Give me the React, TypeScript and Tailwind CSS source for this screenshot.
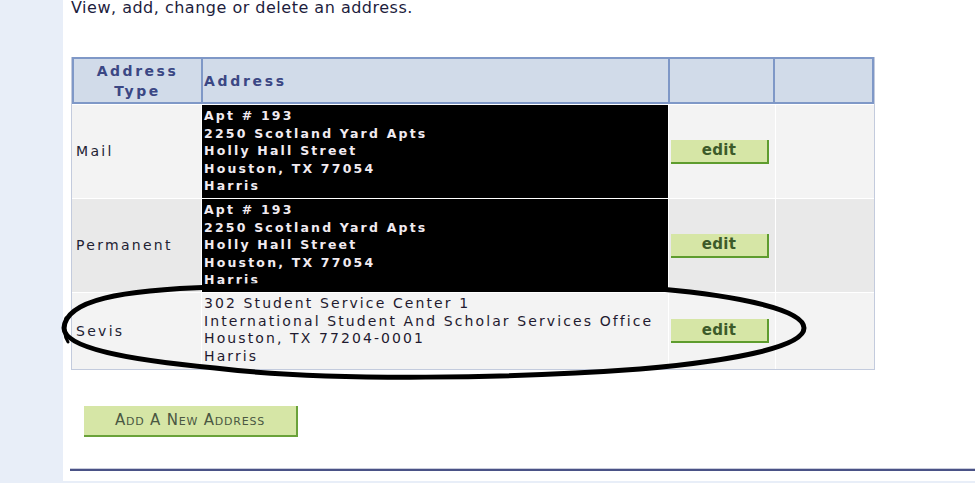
import React from "react";

const redacted = [
  "Apt # 193",
  "2250 Scotland Yard Apts",
  "Holly Hall Street",
  "Houston, TX 77054",
  "Harris",
];

function EditButton() {
  return (
    <button className="w-[98px] h-[24px] bg-[#d6e6a6] border-r-2 border-b-2 border-[#5e9c2e] text-[15px] font-bold text-[#3d5b2a] leading-none tracking-[0.3px]">
      edit
    </button>
  );
}

function Redacted() {
  return (
    <div className="h-full bg-black overflow-hidden pl-[2px] pt-[2px] text-[12.5px] font-bold leading-[17.5px] tracking-[2.2px] text-[#f1ebf1]">
      {redacted.map((l, i) => (
        <div key={i} className="whitespace-nowrap">
          {l}
        </div>
      ))}
    </div>
  );
}

export default function App() {
  return (
    <div className="relative w-[975px] h-[483px] overflow-hidden bg-[#e8eef8] flex font-['DejaVu_Sans',Verdana,sans-serif]">
      <div className="w-[63px] shrink-0" />
      <div className="w-[912px] h-[481px] bg-white pl-[8px] flex flex-col">
        <p className="-mt-[2px] text-[16px] leading-[20px] text-[#1d1d3d] tracking-[0.5px] whitespace-nowrap">
          View, add, change or delete an address.
        </p>

        <div className="mt-[39px] w-[804px] border-x border-b border-[#c3cbdd]">
          {/* header */}
          <div className="grid grid-cols-[127px_465px_103px_97px] gap-[2px] p-[2px] bg-[#7f98c7] h-[47px]">
            <div className="bg-[#d1dbe9] flex items-center justify-center text-center text-[14px] font-bold leading-[20px] tracking-[2.5px] text-[#3b4784] pt-[1px]">
              Address
              <br />
              Type
            </div>
            <div className="bg-[#d1dbe9] flex items-center pl-[1px] pt-[2px] text-[14px] font-bold tracking-[2.7px] text-[#3b4784]">
              Address
            </div>
            <div className="bg-[#d1dbe9]" />
            <div className="bg-[#d1dbe9]" />
          </div>

          {/* body */}
          <div className="grid grid-cols-[129px_466px_106px_98px] grid-rows-[93px_93px_76px] gap-[1px] pt-[1px] bg-white text-[14px] text-[#222233] tracking-[2.3px]">
            <div className="bg-[#f3f3f3] flex items-center pl-[4px]">Mail</div>
            <Redacted />
            <div className="bg-[#f3f3f3] flex items-center pl-[2px]">
              <EditButton />
            </div>
            <div className="bg-[#f3f3f3]" />

            <div className="bg-[#e9e9e9] flex items-center pl-[4px]">Permanent</div>
            <Redacted />
            <div className="bg-[#e9e9e9] flex items-center pl-[2px]">
              <EditButton />
            </div>
            <div className="bg-[#e9e9e9]" />

            <div className="bg-[#f3f3f3] flex items-center pl-[4px]">Sevis</div>
            <div className="bg-[#f3f3f3] pl-[2px] pt-[2px] leading-[17.5px] text-[#1f1a2f] tracking-[2.1px] whitespace-nowrap overflow-hidden">
              <div>302 Student Service Center 1</div>
              <div>International Student And Scholar Services Office</div>
              <div>Houston, TX 77204-0001</div>
              <div>Harris</div>
            </div>
            <div className="bg-[#f3f3f3] flex items-center pl-[2px]">
              <EditButton />
            </div>
            <div className="bg-[#f3f3f3]" />
          </div>
        </div>

        <div className="mt-[36px] ml-[13px]">
          <button className="w-[214px] h-[31px] bg-[#d6e6a6] border-r-2 border-b-2 border-[#6aa23a] text-[15px] [font-variant:small-caps] tracking-[0.8px] text-[#4a5842] leading-none">
            Add A New Address
          </button>
        </div>

        <div className="mt-[31px] -ml-[1px] border-t border-[#c9ccdc]">
          <div className="h-[2px] bg-[#4a5286]" />
        </div>
      </div>

      <svg
        className="absolute left-0 top-0 pointer-events-none"
        width="975"
        height="483"
        viewBox="0 0 975 483"
      >
        <path
          d="M 64 328 C 66 300, 120 290, 215 287 C 350 282, 560 283, 660 289 C 740 296, 804 310, 804 328 C 804 346, 740 360, 640 369 C 520 378, 330 382, 215 368 C 130 360, 64 348, 64 328 Z"
          fill="none"
          stroke="#000"
          strokeWidth="5"
          strokeLinejoin="round"
        />
        <path
          d="M 66 318 C 64 326, 64 336, 68 342"
          fill="none"
          stroke="#000"
          strokeWidth="3"
          strokeLinecap="round"
        />
      </svg>
    </div>
  );
}
